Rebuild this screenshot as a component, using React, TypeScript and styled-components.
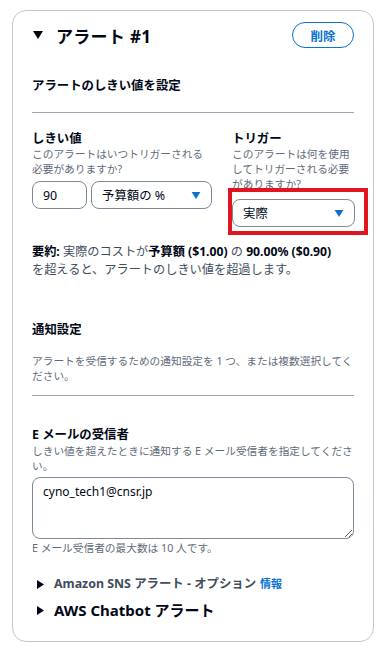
import React from 'react';
import styled, { createGlobalStyle } from 'styled-components';

const GlobalStyle = createGlobalStyle`
    body {
        margin: 0;
        background: #ffffff;
        font-family: "Noto Sans", "Noto Sans CJK JP", sans-serif;
        color: #000716;
    }
`;

const Page = styled.div`
    padding: 10px 7px 6px 12px;
`;

const Card = styled.div`
    border: 1px solid #c6c6cd;
    border-radius: 14px;
    padding: 11px 19px 20px 19px;
    background: #ffffff;
`;

const Header = styled.div`
    display: flex;
    align-items: center;
    justify-content: space-between;
    height: 26px;
`;

const HeaderTitle = styled.div`
    display: flex;
    align-items: center;
    gap: 13px;
    padding-left: 1px;
    font-size: 17px;
    font-weight: 700;
    letter-spacing: 0.3px;
`;

const DeleteButton = styled.button`
    width: 62px;
    height: 26px;
    border: 1.5px solid #0972d3;
    border-radius: 14px;
    background: #ffffff;
    color: #0972d3;
    font-family: inherit;
    font-size: 12.5px;
    font-weight: 700;
    padding: 0;
`;

const SectionTitle = styled.div<{ $top: number }>`
    margin-top: ${(p) => p.$top}px;
    font-size: 12.4px;
    font-weight: 700;
    line-height: 18px;
`;

const Divider = styled.hr<{ $top: number }>`
    margin: ${(p) => p.$top}px 0 0 0;
    border: none;
    border-top: 1px solid #9ba7b6;
`;

const Columns = styled.div`
    display: grid;
    grid-template-columns: 180px 123px;
    column-gap: 20px;
    margin-top: 18px;
    align-items: start;
`;

const Field = styled.div`
    display: flex;
    flex-direction: column;
`;

const Label = styled.div`
    font-size: 12.4px;
    font-weight: 700;
    line-height: 16px;
`;

const Desc = styled.div<{ $top?: number }>`
    margin-top: ${(p) => p.$top ?? 0}px;
    font-size: 10.7px;
    line-height: 15px;
    color: #5f6b7a;
`;

const Controls = styled.div<{ $top: number }>`
    display: flex;
    gap: 4px;
    margin-top: ${(p) => p.$top}px;
`;

const NumberBox = styled.div`
    box-sizing: border-box;
    width: 55px;
    height: 28px;
    border: 1px solid #7d8998;
    border-radius: 8px;
    padding: 0 10px;
    display: flex;
    align-items: center;
    font-size: 12.4px;
`;

const SelectBox = styled.div<{ $width: number }>`
    box-sizing: border-box;
    width: ${(p) => p.$width}px;
    height: 28px;
    border: 1px solid #7d8998;
    border-radius: 8px;
    padding: 0 10px 0 10px;
    display: flex;
    align-items: center;
    justify-content: space-between;
    font-size: 12.4px;
`;

const Highlight = styled.div`
    position: relative;
`;

const RedFrame = styled.div`
    position: absolute;
    top: -11px;
    left: -4px;
    right: -13px;
    bottom: -8px;
    border: 4px solid #e0151d;
    pointer-events: none;
`;

const Summary = styled.p`
    margin: 16px 0 0 0;
    font-size: 12.2px;
    line-height: 18px;
    color: #414d5c;

    & b {
        color: #000716;
    }
`;

const Recipients = styled.textarea`
    display: block;
    box-sizing: border-box;
    width: 100%;
    height: 62px;
    margin-top: 3px;
    border: 1px solid #7d8998;
    border-radius: 8px;
    padding: 5px 10px;
    font-family: inherit;
    font-size: 12px;
    line-height: 18px;
    color: #000716;
    resize: vertical;
    outline: none;
`;

const Expander = styled.div<{ $top: number; $size: number; $height: number; $dark?: boolean }>`
    display: flex;
    align-items: center;
    gap: 10px;
    margin-top: ${(p) => p.$top}px;
    padding-left: 5px;
    font-size: ${(p) => p.$size}px;
    line-height: ${(p) => p.$height}px;
    font-weight: 700;
    color: ${(p) => (p.$dark ? '#000716' : '#414d5c')};
`;

const InfoLink = styled.span`
    margin-left: 4px;
    color: #0972d3;
    font-size: 11px;
    font-weight: 700;
`;

const CaretDown = ({ color = '#000716', w = 10, h = 8 }: { color?: string; w?: number; h?: number }) => (
    <svg width={w} height={h} viewBox="0 0 10 8">
        <polygon points="0,0 10,0 5,8" fill={color} />
    </svg>
);

const CaretRight = () => (
    <svg width={7} height={9} viewBox="0 0 7 9">
        <polygon points="0,0 7,4.5 0,9" fill="#000716" />
    </svg>
);

const App: React.FC = () => {
    return (
        <Page>
            <GlobalStyle />
            <Card>
                <Header>
                    <HeaderTitle>
                        <CaretDown w={10} h={8} />
                        <span>アラート #1</span>
                    </HeaderTitle>
                    <DeleteButton>削除</DeleteButton>
                </Header>

                <SectionTitle $top={29}>アラートのしきい値を設定</SectionTitle>
                <Divider $top={17} />

                <Columns>
                    <Field>
                        <Label>しきい値</Label>
                        <Desc>このアラートはいつトリガーされる必要がありますか?</Desc>
                        <Controls $top={4}>
                            <NumberBox>90</NumberBox>
                            <SelectBox $width={121}>
                                <span>予算額の %</span>
                                <CaretDown color="#0972d3" w={10} h={7} />
                            </SelectBox>
                        </Controls>
                    </Field>
                    <Field>
                        <Label>トリガー</Label>
                        <Desc>このアラートは何を使用してトリガーされる必要がありますか?</Desc>
                        <Controls $top={7}>
                            <Highlight>
                                <SelectBox $width={123}>
                                    <span>実際</span>
                                    <CaretDown color="#0972d3" w={10} h={7} />
                                </SelectBox>
                                <RedFrame />
                            </Highlight>
                        </Controls>
                    </Field>
                </Columns>

                <Summary>
                    <b>要約:</b> 実際のコストが<b>予算額 ($1.00)</b> の <b>90.00% ($0.90)</b>
                    <br />
                    を超えると、アラートのしきい値を超過します。
                </Summary>

                <SectionTitle $top={42}>通知設定</SectionTitle>
                <Desc $top={15}>
                    アラートを受信するための通知設定を 1 つ、または複数選択してください。
                </Desc>
                <Divider $top={11} />

                <SectionTitle $top={30}>E メールの受信者</SectionTitle>
                <Desc>しきい値を超えたときに通知する E メール受信者を指定してください。</Desc>
                <Recipients defaultValue="cyno_tech1@cnsr.jp" />
                <Desc $top={2}>E メール受信者の最大数は 10 人です。</Desc>

                <Expander $top={19} $size={12.4} $height={18}>
                    <CaretRight />
                    <span>
                        Amazon SNS アラート - オプション<InfoLink>情報</InfoLink>
                    </span>
                </Expander>
                <Expander $top={6} $size={15} $height={22} $dark>
                    <CaretRight />
                    <span>AWS Chatbot アラート</span>
                </Expander>
            </Card>
        </Page>
    );
};

export default App;
